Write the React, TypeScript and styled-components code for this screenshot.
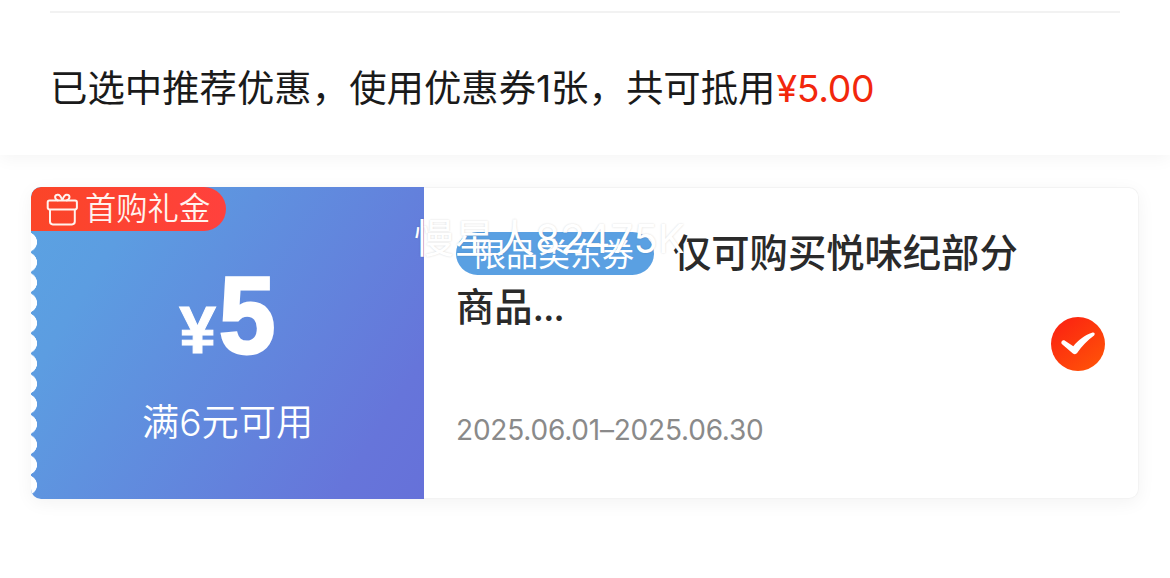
import React from "react";
import styled, { createGlobalStyle } from "styled-components";

const App: React.FC = () => {
  return (
    <Page>
      <GlobalStyle />
      <Summary>
        <Divider />
        <SummaryText>
          已选中推荐优惠，使用优惠券<One>1</One>张，共可抵用
          <Amount>¥5.00</Amount>
        </SummaryText>
      </Summary>
      <Coupon>
        <Value>
          <Perforation />
          <GiftBadge>
            <GiftIcon />
            <span>首购礼金</span>
          </GiftBadge>
          <Price>
            <Currency>¥</Currency>
            <Digit>5</Digit>
          </Price>
          <Condition>
            满<span>6</span>元可用
          </Condition>
        </Value>
        <Detail>
          <Info>
            <Title>
              <Tag>限品类东券</Tag>仅可购买悦味纪部分
              <br />
              商品<Dots>...</Dots>
            </Title>
            <Period>2025.06.01–2025.06.30</Period>
          </Info>
          <CheckIcon />
        </Detail>
        <Watermark>慢星人82475K</Watermark>
      </Coupon>
    </Page>
  );
};

const GiftIcon: React.FC = () => (
  <svg width="32" height="33" viewBox="0 0 32 33" fill="none" stroke="#fff3ee" strokeWidth="2">
    <rect x="1.7" y="7.6" width="29.2" height="8.8" rx="1.8" />
    <path d="M4 16.4V28.6a2.8 2.8 0 0 0 2.8 2.8H26a2.8 2.8 0 0 0 2.8-2.8V16.4" />
    <path d="M16.3 7.6C15.2 3.2 13.2 1.2 11.2 1.8C8 2.6 8.6 6.6 12.4 7.6M16.3 7.6C17.4 3.2 19.4 1.2 21.4 1.8C24.6 2.6 24 6.6 20.2 7.6" />
  </svg>
);

const CheckIcon: React.FC = () => (
  <CheckSvg width="56" height="56" viewBox="0 0 56 56">
    <defs>
      <linearGradient id="check" x1="0" y1="0" x2="0.8" y2="1">
        <stop offset="0" stopColor="#fb1e12" />
        <stop offset="1" stopColor="#ff5208" />
      </linearGradient>
    </defs>
    <circle cx="28" cy="28" r="27" fill="url(#check)" />
    <path
      d="M11.4 26C12 24.2 13.8 23.8 15 24.7L23.3 30.2C28.2 24.2 34.5 19.2 42 16.7C44.5 16 45.6 17.9 44.1 19.4C37.5 24.1 31.8 30 27.1 37.1C26.2 38.5 24.2 38.6 22.9 37.5L12.1 28.3C11.4 27.7 11.2 26.8 11.4 26Z"
      fill="#fff"
    />
  </CheckSvg>
);

export default App;

const GlobalStyle = createGlobalStyle`
  body {
    margin: 0;
    background: #fff;
  }
  * {
    box-sizing: border-box;
  }
`;

const Page = styled.div`
  width: 1170px;
  height: 578px;
  overflow: hidden;
  background: #fff;
  font-family: Inter, "Noto Sans CJK SC", sans-serif;
`;

const Summary = styled.header`
  height: 155px;
  padding: 11px 50px 0;
  background: #fff;
  box-shadow: 0 4px 16px rgba(0, 0, 0, 0.045);
`;

const Divider = styled.div`
  height: 2px;
  background: #f2f2f2;
`;

const SummaryText = styled.div`
  margin-top: 46px;
  height: 60px;
  line-height: 60px;
  font-size: 37.4px;
  color: #1a1a1a;
  white-space: nowrap;
`;

const One = styled.span`
  letter-spacing: -0.2px;
`;

const Amount = styled.span`
  margin-left: 1px;
  color: #f2270c;
  letter-spacing: -0.3px;
`;

const Coupon = styled.section`
  position: relative;
  display: flex;
  margin: 32px 31px 0;
  height: 312px;
  border-radius: 10px;
  box-shadow: 0 4px 18px rgba(0, 0, 0, 0.05);
`;

const Value = styled.div`
  position: relative;
  display: flex;
  flex-direction: column;
  width: 393px;
  border-radius: 10px 0 0 10px;
  background: linear-gradient(122deg, #5ba3e2 0%, #5c9de1 20%, #6675da 85%, #6671d9 100%);
  color: #fff;
  overflow: hidden;
`;

const Perforation = styled.div`
  position: absolute;
  left: 0;
  top: 44.5px;
  width: 7px;
  height: 263.5px;
  background: radial-gradient(circle at -4px 10.1px, #fff 9.7px, transparent 10.3px) 0 0 / 7px 20.25px repeat-y;
`;

const GiftBadge = styled.div`
  position: relative;
  display: flex;
  align-items: center;
  gap: 7px;
  width: 195px;
  height: 44px;
  padding-left: 15px;
  border-radius: 10px 22px 22px 0;
  background: linear-gradient(90deg, #fb4528, #ff413d);
  color: #fff3ee;
  font-size: 31.3px;
  font-weight: 350;
  line-height: 46px;
  white-space: nowrap;
`;

const Price = styled.div`
  display: flex;
  align-items: baseline;
  justify-content: center;
  margin-top: 34px;
  padding-left: 2px;
  height: 100px;
  font-family: "Liberation Sans", sans-serif;
  font-weight: 700;
  line-height: 100px;
`;

const Currency = styled.span`
  font-size: 66px;
  -webkit-text-stroke: 1px #fff;
`;

const Digit = styled.span`
  margin-left: 1px;
  font-size: 109px;
  -webkit-text-stroke: 3px #fff;
  transform: scaleX(0.93);
`;

const Condition = styled.div`
  margin-top: 35px;
  text-align: center;
  font-size: 37.2px;
  font-weight: 350;
  line-height: 46px;
`;

const Detail = styled.div`
  display: flex;
  flex: 1;
  align-items: center;
  justify-content: space-between;
  padding-right: 32px;
  border: 1px solid #f3f3f3;
  border-left: 0;
  border-radius: 0 10px 10px 0;
  background: #fff;
`;

const CheckSvg = styled.svg`
  margin-top: 1px;
`;

const Info = styled.div`
  display: flex;
  flex-direction: column;
  justify-content: space-between;
  height: 100%;
  padding: 38px 0 48px 32px;
`;

const Title = styled.div`
  font-size: 38.3px;
  font-weight: 500;
  line-height: 54px;
  color: #2a2a2a;
  white-space: nowrap;
`;

const Tag = styled.span`
  display: inline-block;
  width: 198px;
  height: 43px;
  margin: -3px 19px 3px 0;
  padding-left: 18px;
  border-radius: 22px;
  background: #5aa0e2;
  color: #fff;
  font-size: 32px;
  font-weight: 400;
  line-height: 46px;
  vertical-align: middle;
`;

const Dots = styled.span`
  letter-spacing: -1.3px;
`;

const Period = styled.div`
  font-size: 28px;
  letter-spacing: -0.2px;
  line-height: 40px;
  color: #8a8a8a;
`;

const Watermark = styled.div`
  position: absolute;
  left: 383px;
  top: 27px;
  font-size: 40px;
  font-weight: 400;
  letter-spacing: 0.4px;
  line-height: 50px;
  color: #fff;
  text-shadow: 0 0 2px rgba(0, 0, 0, 0.16);
  white-space: nowrap;
`;
